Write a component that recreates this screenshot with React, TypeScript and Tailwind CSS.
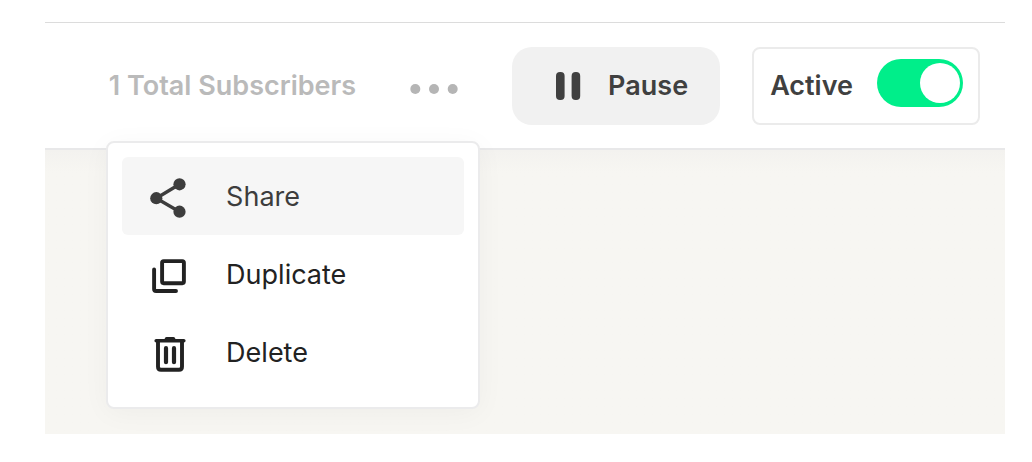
import { useState } from "react";
import type { ReactNode } from "react";

function ShareIcon() {
  return (
    <svg width="40" height="40" viewBox="0 0 40 40" className="overflow-visible" aria-hidden="true">
      <g fill="#3d3d3d" stroke="#3d3d3d">
        <path d="M29.5 8.3 6.3 22.2 29.5 35.7" fill="none" strokeWidth="3.4" />
        <circle cx="29.5" cy="8.3" r="6.1" stroke="none" />
        <circle cx="6.3" cy="22.2" r="6.1" stroke="none" />
        <circle cx="29.5" cy="35.7" r="6.1" stroke="none" />
      </g>
    </svg>
  );
}

function DuplicateIcon() {
  return (
    <svg width="40" height="40" viewBox="0 0 40 40" fill="none" stroke="#222" strokeWidth="3.9" strokeLinecap="round" strokeLinejoin="round" aria-hidden="true">
      <rect x="12.1" y="7.1" width="21.8" height="22.1" rx="1.6" />
      <path d="M4.1 15.5V35q0 2 2 2H26" />
    </svg>
  );
}

function TrashIcon() {
  return (
    <svg width="40" height="40" viewBox="0 0 40 40" fill="none" stroke="#222" strokeWidth="3.9" strokeLinecap="round" strokeLinejoin="round" aria-hidden="true">
      <path d="M8 9V34.8q0 3 3 3H29q3 0 3-3V9" />
      <path d="M6.2 8.8H33.8" strokeWidth="3.6" />
      <path d="M16.5 6.6H23.5" strokeWidth="3.4" />
      <path d="M16 16.2V30.2M24 16.2V30.2" strokeWidth="4.2" />
    </svg>
  );
}

function MenuItem({ icon, label, active = false }: { icon: ReactNode; label: string; active?: boolean }) {
  return (
    <button
      type="button"
      role="menuitem"
      className={
        active
          ? "flex h-[78px] items-center gap-9 rounded-md bg-[#f6f6f6] pl-7 text-left text-[#3d3d3d]"
          : "flex h-[78px] items-center gap-9 rounded-md pl-7 text-left text-[#222222]"
      }
    >
      {icon}
      <span className="pt-0.5">{label}</span>
    </button>
  );
}

export default function App() {
  const [on, setOn] = useState(true);
  return (
    <div className="bg-white pt-[22px] pr-[27px] pb-7 pl-[45px] font-['Inter',sans-serif] text-[27px] leading-8">
      <header className="flex items-center justify-end border-t border-b-2 border-t-[#dcdcdc] border-b-[#e8e8e9] pt-6 pr-[25px] pb-[23px]">
        <div className="relative mr-8 flex h-[78px] items-center gap-8 font-semibold text-[#bababa]">
          <span>1 Total Subscribers</span>
          <button type="button" aria-label="More options" aria-haspopup="menu" className="flex h-12 w-[92px] items-center justify-center">
            <svg width="50" height="12" viewBox="0 0 50 12" fill="#b5b5b5" className="mt-1.5" aria-hidden="true">
              <circle cx="6.3" cy="6" r="5" />
              <circle cx="25" cy="6" r="5" />
              <circle cx="43.7" cy="6" r="5" />
            </svg>
          </button>
          <div
            role="menu"
            className="absolute top-full right-0 mt-4 flex w-[374px] flex-col rounded-lg border-2 border-[#ebebec] bg-white px-[14px] pt-[14px] pb-4 font-normal shadow-[0_4px_28px_rgba(0,0,0,0.04)]"
          >
            <MenuItem icon={<ShareIcon />} label="Share" active />
            <MenuItem icon={<DuplicateIcon />} label="Duplicate" />
            <MenuItem icon={<TrashIcon />} label="Delete" />
          </div>
        </div>
        <button type="button" className="mr-8 flex h-[78px] items-center gap-[27px] rounded-[20px] bg-[#f1f1f1] pr-8 pl-11 font-semibold text-[#404040]">
          <svg width="25" height="28" viewBox="0 0 25 28" fill="#404040" aria-hidden="true">
            <rect x="0" y="0" width="8.6" height="28" rx="4" />
            <rect x="15.6" y="0" width="8.6" height="28" rx="4" />
          </svg>
          Pause
        </button>
        <label className="flex h-[78px] items-start gap-6 rounded-lg border-2 border-[#ebebeb] pt-2.5 pr-[15px] pl-4 font-semibold text-[#404040]">
          <span className="pt-[11px]">Active</span>
          <input type="checkbox" role="switch" checked={on} onChange={(e) => setOn(e.target.checked)} className="peer sr-only" />
          <span className="flex h-12 w-[86px] items-center rounded-full bg-[#c9c9c9] px-[3px] peer-checked:justify-end peer-checked:bg-[#00ee8a]">
            <span className="size-10 rounded-full bg-white" />
          </span>
        </label>
      </header>
      <main className="h-[284px] bg-[#f7f6f2] bg-linear-to-b from-[#f3f2ef] to-[#f7f6f2] to-8%" />
    </div>
  );
}
